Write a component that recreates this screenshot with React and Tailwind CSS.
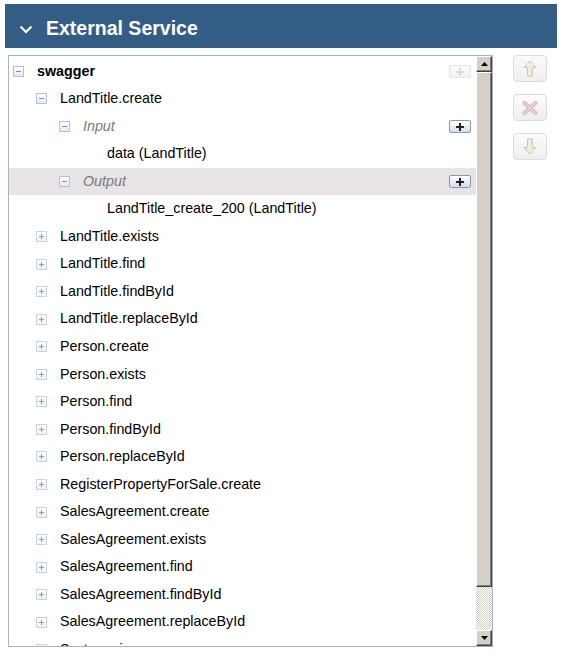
import React from "react";

const rows = [
  { label: "swagger", level: 0, icon: "minus", bold: true, add: "off" },
  { label: "LandTitle.create", level: 1, icon: "minus" },
  { label: "Input", level: 2, icon: "minus", io: true, add: "on" },
  { label: "data (LandTitle)", level: 3 },
  { label: "Output", level: 2, icon: "minus", io: true, add: "on", selected: true },
  { label: "LandTitle_create_200 (LandTitle)", level: 3 },
  { label: "LandTitle.exists", level: 1, icon: "plus" },
  { label: "LandTitle.find", level: 1, icon: "plus" },
  { label: "LandTitle.findById", level: 1, icon: "plus" },
  { label: "LandTitle.replaceById", level: 1, icon: "plus" },
  { label: "Person.create", level: 1, icon: "plus" },
  { label: "Person.exists", level: 1, icon: "plus" },
  { label: "Person.find", level: 1, icon: "plus" },
  { label: "Person.findById", level: 1, icon: "plus" },
  { label: "Person.replaceById", level: 1, icon: "plus" },
  { label: "RegisterPropertyForSale.create", level: 1, icon: "plus" },
  { label: "SalesAgreement.create", level: 1, icon: "plus" },
  { label: "SalesAgreement.exists", level: 1, icon: "plus" },
  { label: "SalesAgreement.find", level: 1, icon: "plus" },
  { label: "SalesAgreement.findById", level: 1, icon: "plus" },
  { label: "SalesAgreement.replaceById", level: 1, icon: "plus" },
  { label: "System.ping", level: 1, icon: "plus" },
];

// sangría por nivel (clases completas para que Tailwind las genere)
const indent = ["pl-[4px]", "pl-[27px]", "pl-[50px]", "pl-[74px]"];

const Expander = ({ type }) => {
  const open = type === "minus";
  return (
    <div
      className={`relative w-[11px] h-[11px] shrink-0 border ${
        open
          ? "border-[#b3c0d4] bg-gradient-to-b from-[#ffffff] to-[#e4eaf3]"
          : "border-[#c9d3e2] bg-gradient-to-b from-[#ffffff] to-[#eef2f8]"
      }`}
    >
      <div
        className={`absolute left-[2px] top-[4px] w-[5px] h-px ${
          open ? "bg-[#7d8dab]" : "bg-[#8d9cb8]"
        }`}
      />
      {!open && (
        <div className="absolute left-[4px] top-[2px] w-px h-[5px] bg-[#8d9cb8]" />
      )}
    </div>
  );
};

const AddButton = ({ enabled }) => (
  <div
    className={`relative w-[22px] h-[13px] rounded-[2px] border shrink-0 ${
      enabled
        ? "border-[#8a98ab] bg-gradient-to-b from-[#ffffff] to-[#d5dde8]"
        : "border-[#e2e4e7] bg-gradient-to-b from-[#fbfbfb] to-[#eff1f3]"
    }`}
  >
    <div
      className={`absolute left-[6px] top-[5px] w-[8px] h-[2px] ${
        enabled ? "bg-[#222]" : "bg-[#d8dadd]"
      }`}
    />
    <div
      className={`absolute left-[9px] top-[2px] w-[2px] h-[8px] ${
        enabled ? "bg-[#222]" : "bg-[#d8dadd]"
      }`}
    />
  </div>
);

const ScrollButton = ({ down }) => (
  <div className="w-[16px] h-[16px] bg-[#d4d0c8] border-t border-l border-t-white border-l-white border-r border-b border-r-[#404040] border-b-[#404040] flex items-center justify-center shadow-[inset_-1px_-1px_0_#808080]">
    <svg width="7" height="4" viewBox="0 0 7 4">
      {down ? (
        <path d="M0 0 H7 L3.5 4 Z" fill="#000" />
      ) : (
        <path d="M3.5 0 L7 4 H0 Z" fill="#000" />
      )}
    </svg>
  </div>
);

const SideButton = ({ children }) => (
  <div className="w-[34px] h-[27px] rounded-[4px] border border-[#dcdcdc] bg-gradient-to-b from-[#fbfbfb] to-[#eeeeee] flex items-center justify-center">
    {children}
  </div>
);

export default function App() {
  return (
    <div className="w-[565px] h-[657px] bg-white pt-[4px] font-['Liberation_Sans',Arial,sans-serif] text-black">
      {/* Cabecera */}
      <div className="ml-[5px] w-[552px] h-[44px] bg-[#335d85] flex items-center pt-[5px]">
        <svg className="ml-[14px]" width="14" height="14" viewBox="0 0 14 14">
          <polyline
            points="1.5,4.5 7,10 12.5,4.5"
            fill="none"
            stroke="#fff"
            strokeWidth="2"
          />
        </svg>
        <span className="ml-[13px] text-white font-bold text-[19.5px] leading-none">
          External Service
        </span>
      </div>

      <div className="flex items-start mt-[7px]">
        {/* Árbol */}
        <div className="ml-[8px] w-[485px] h-[592px] border border-[#aab3bf] flex overflow-hidden">
          <div className="flex-1 pt-[1.5px] overflow-hidden">
            {rows.map((r, i) => (
              <div
                key={i}
                className={`h-[27.55px] flex items-center pr-[5px] ${indent[r.level]} ${
                  r.selected ? "bg-[#e7e3e7]" : ""
                }`}
              >
                {r.icon ? <Expander type={r.icon} /> : <div className="w-[11px] shrink-0" />}
                <span
                  className={`ml-[13px] text-[14.3px] whitespace-nowrap ${
                    r.bold ? "font-bold" : ""
                  } ${r.io ? "italic text-[#7b7b7b]" : ""}`}
                >
                  {r.label}
                </span>
                {r.add && (
                  <div className="ml-auto">
                    <AddButton enabled={r.add === "on"} />
                  </div>
                )}
              </div>
            ))}
          </div>

          {/* Barra de desplazamiento */}
          <div className="w-[16px] flex flex-col">
            <ScrollButton />
            <div className="h-[515px] bg-[#d4d0c8] border-t border-l border-white border-r border-b border-r-[#404040] border-b-[#404040] shadow-[inset_-1px_-1px_0_#808080]" />
            <div className="flex-1 bg-[image:repeating-conic-gradient(#d4d0c8_0%_25%,#ffffff_0%_50%)] bg-[length:2px_2px]" />
            <ScrollButton down />
          </div>
        </div>

        {/* Botones laterales */}
        <div className="ml-[20px] flex flex-col gap-[12px]">
          <SideButton>
            <svg width="14" height="17" viewBox="0 0 14 17">
              <path
                d="M7 1 L13 7.5 H9.5 V16 H4.5 V7.5 H1 Z"
                fill="#efebde"
                stroke="#cfc6b2"
                strokeWidth="1"
              />
            </svg>
          </SideButton>
          <SideButton>
            <svg width="16" height="14" viewBox="0 0 16 14">
              <path
                d="M2.5 2 L13.5 12 M13.5 2 L2.5 12"
                stroke="#d6b9bd"
                strokeWidth="4"
                strokeLinecap="round"
              />
              <path
                d="M2.5 2 L13.5 12 M13.5 2 L2.5 12"
                stroke="#e4d0d2"
                strokeWidth="2"
                strokeLinecap="round"
              />
            </svg>
          </SideButton>
          <SideButton>
            <svg width="14" height="17" viewBox="0 0 14 17">
              <path
                d="M7 16 L13 9.5 H9.5 V1 H4.5 V9.5 H1 Z"
                fill="#efebde"
                stroke="#cfc6b2"
                strokeWidth="1"
              />
            </svg>
          </SideButton>
        </div>
      </div>
    </div>
  );
}
